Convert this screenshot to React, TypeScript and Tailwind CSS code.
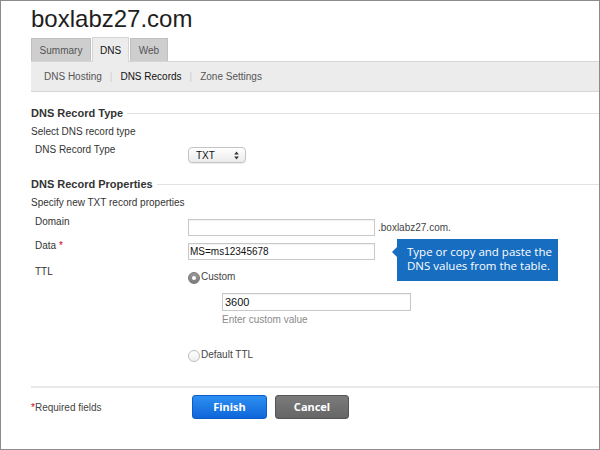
import React from 'react';

function Radio({ checked }: { checked?: boolean }) {
  if (checked) {
    return (
      <span className="w-[12px] h-[12px] rounded-full bg-gradient-to-b from-[#9a9a9a] to-[#7c7c7c] border border-[#777] flex items-center justify-center shrink-0">
        <span className="w-[4px] h-[4px] rounded-full bg-white" />
      </span>
    );
  }
  return <span className="w-[12px] h-[12px] rounded-full bg-gradient-to-b from-white to-[#f0f0f0] border border-[#bdbdbd] shrink-0" />;
}

function Field({ label, required, children }: { label: string; required?: boolean; children: React.ReactNode }) {
  return (
    <div className="flex">
      <div className="w-[157px] pl-[4px] leading-[12px] shrink-0">
        {label}
        {required && <span className="text-[#d0021b]"> *</span>}
      </div>
      <div>{children}</div>
    </div>
  );
}

export default function App() {
  return (
    <div className="relative w-[600px] h-[450px] border border-[#8c8c8c] bg-white overflow-hidden font-['Liberation_Sans',Arial,sans-serif] text-[10px] text-[#333]">
      <div className="pl-[30px]">
        <h1 className="pt-[6px] text-[24px] leading-[24px] text-[#1e1e1e]">boxlabz27.com</h1>

        {/* Tabs */}
        <div className="flex items-end h-[24px] mt-[6px]">
          <div className="w-[60px] h-[23px] flex items-center justify-center bg-[#cecece] border border-b-0 border-[#c0c0c0] text-[#555]">Summary</div>
          <div className="relative z-10 -mb-px ml-[1px] w-[37px] h-[25px] flex items-center justify-center bg-[#ececec] border border-b-0 border-[#d4d4d4] text-[#111]">DNS</div>
          <div className="ml-[1px] w-[38px] h-[23px] flex items-center justify-center bg-[#cecece] border border-b-0 border-[#c0c0c0] text-[#555]">Web</div>
        </div>

        {/* Sub navigation */}
        <div className="h-[31px] flex items-center gap-[8px] pl-[13px] bg-[#ececec] border-y border-[#d6d6d6]">
          <span className="text-[#555]">DNS Hosting</span>
          <span className="text-[#cfcfcf]">|</span>
          <span className="text-[#111]">DNS Records</span>
          <span className="text-[#cfcfcf]">|</span>
          <span className="text-[#555]">Zone Settings</span>
        </div>

        {/* DNS Record Type */}
        <div className="mt-[14px] flex items-center gap-[4px] h-[14px]">
          <span className="text-[11px] font-bold text-[#333]">DNS Record Type</span>
          <span className="flex-1 h-px bg-[#e2e2e2]" />
        </div>
        <div className="mt-[6px] leading-[12px]">Select DNS record type</div>
        <div className="mt-[3px] flex">
          <div className="w-[157px] pl-[4px] pt-[3px] leading-[12px]">DNS Record Type</div>
          <div className="mt-[6px] w-[58px] h-[16px] rounded-[4px] border border-[#c4c4c4] bg-gradient-to-b from-white to-[#ebebeb] shadow-[0_1px_1px_rgba(0,0,0,0.08)] flex items-center justify-between pl-[7px] pr-[6px] text-[#111]">
            <span>TXT</span>
            <svg width="5" height="9" viewBox="0 0 5 9">
              <path d="M2.5 0.5 L4.8 3.6 L0.2 3.6 Z" fill="#333" />
              <path d="M2.5 8.5 L4.8 5.4 L0.2 5.4 Z" fill="#333" />
            </svg>
          </div>
        </div>

        {/* DNS Record Properties */}
        <div className="mt-[14px] flex items-center gap-[4px] h-[14px]">
          <span className="text-[11px] font-bold text-[#333]">DNS Record Properties</span>
          <span className="flex-1 h-px bg-[#e2e2e2]" />
        </div>
        <div className="mt-[6px] leading-[12px]">Specify new TXT record properties</div>

        <div className="mt-[7px]">
          <Field label="Domain">
            <div className="mt-[3px] flex items-center">
              <div className="w-[187px] h-[17px] border border-[#c8c8c8] shadow-[inset_0_1px_1px_rgba(0,0,0,0.06)]" />
              <span className="ml-[3px] text-[#444]">.boxlabz27.com.</span>
            </div>
          </Field>
        </div>

        <div className="mt-[4px]">
          <Field label="Data" required>
            <div className="mt-[3px] w-[187px] h-[17px] border border-[#c8c8c8] shadow-[inset_0_1px_1px_rgba(0,0,0,0.06)] flex items-center pl-[1px] text-[#111]">
              MS=ms12345678
            </div>
          </Field>
        </div>

        <div className="mt-[6px]">
          <Field label="TTL">
            <div className="mt-[6px] flex items-center gap-[1px]">
              <Radio checked />
              <span className="text-[#444] leading-[12px] -mt-[2px]">Custom</span>
            </div>
            <div className="ml-[34px] mt-[9px] w-[189px] h-[18px] border border-[#c8c8c8] shadow-[inset_0_1px_1px_rgba(0,0,0,0.06)] flex items-center pl-[2px] text-[11px] text-[#111]">
              3600
            </div>
            <div className="ml-[34px] mt-[3px] leading-[12px] text-[#8a8a8a]">Enter custom value</div>
            <div className="mt-[24px] flex items-center gap-[1px]">
              <Radio />
              <span className="text-[#444] leading-[12px] -mt-[2px]">Default TTL</span>
            </div>
          </Field>
        </div>

        <div className="mt-[24px] h-[2px] bg-[#e8e8e8]" />

        <div className="mt-[7px] flex items-center">
          <div className="w-[161px] text-[#444]">
            <span className="text-[#d0021b]">*</span>Required fields
          </div>
          <button className="w-[75px] h-[24px] rounded-[3px] border border-[#0b5cc6] bg-gradient-to-b from-[#2d8ff2] to-[#0f66d9] text-white text-[11px] font-bold font-['Noto_Sans',sans-serif]">
            Finish
          </button>
          <button className="ml-[8px] w-[74px] h-[24px] rounded-[3px] border border-[#555] bg-gradient-to-b from-[#7b7b7b] to-[#666] text-white text-[11px] font-bold font-['Noto_Sans',sans-serif]">
            Cancel
          </button>
        </div>
      </div>

      {/* Callout */}
      <div className="absolute left-[396px] top-[238px] w-[161px] h-[42px] bg-[#176dbf] pl-[10px] pt-[6px] text-white text-[11.5px] leading-[14px] font-['Open_Sans',sans-serif]">
        <span className="absolute -left-[5px] top-[8px] w-0 h-0 border-y-[5px] border-y-transparent border-r-[5px] border-r-[#176dbf]" />
        Type or copy and paste the
        <br />
        DNS values from the table.
      </div>
    </div>
  );
}
